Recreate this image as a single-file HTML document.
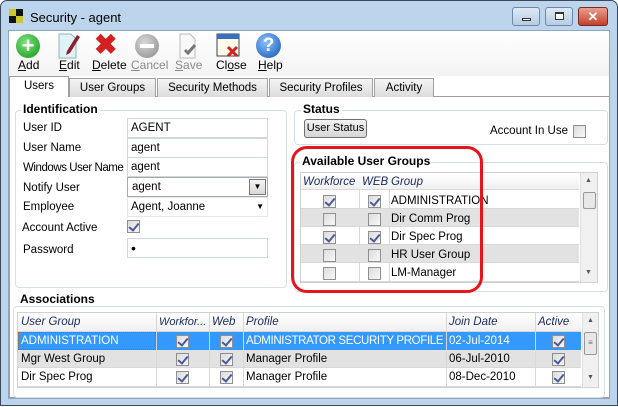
<!DOCTYPE html>
<html><head><meta charset="utf-8"><style>
*{box-sizing:border-box;margin:0;padding:0}
body{width:618px;height:407px;overflow:hidden;background:#fff;font-family:"Liberation Sans",sans-serif;font-size:11px;color:#000;position:relative}
.a{position:absolute}
.win{left:0;top:0;width:618px;height:406px;background:#bcd4ec;border:1px solid #3a4a5a;border-radius:7px 7px 0 0}
.client{left:8px;top:30px;width:602px;height:369px;background:#fff;border:1px solid #8fa6bd}
.tb{left:9px;top:31px;width:600px;height:45px;background:linear-gradient(#fff,#f3f3f3)}
.lbl{font-size:11.5px;white-space:nowrap}
.tab{top:78px;height:19px;border:1px solid #a0a0a0;border-bottom:none;background:linear-gradient(#f4f4f4,#dcdcdc);text-align:center;line-height:18px;font-size:11.5px;white-space:nowrap}
.panel{left:9px;top:96px;width:601px;height:302px;border:1px solid #a0a0a0;background:#fff}
.grp{border:1px solid #d5dfe5;border-radius:4px}
.gt{background:#fff;font-weight:bold;font-size:12px;padding:0 2px}
.in{border:1px solid #cfd8e0;background:#fff;height:20px;line-height:18px;padding-left:3px;font-size:11.5px}
.cb{width:13px;height:13px;border:1px solid #8f8f8f;background:linear-gradient(135deg,#dcdcdc,#f8f8f8)}
.ck::after{content:"";position:absolute;left:3px;top:0px;width:4px;height:8px;border:solid #4a5a9a;border-width:0 2px 2px 0;transform:rotate(40deg)}
.gh{font-style:italic;color:#1a2a5a;font-size:11.5px;white-space:nowrap}
.row{position:absolute;border-bottom:1px solid #d8d8d8}
.sb{background:#f0f0f0;border-left:1px solid #e0e0e0}
.s{font-size:11px}
</style></head><body>
<div class="a win"></div>
<div class="a" style="left:9px;top:9px;width:7px;height:7px;background:#c8c830"></div>
<div class="a" style="left:16px;top:9px;width:7px;height:7px;background:#111"></div>
<div class="a" style="left:9px;top:16px;width:7px;height:7px;background:#111"></div>
<div class="a" style="left:16px;top:16px;width:7px;height:7px;background:#c8c830"></div>
<div class="a" style="left:30px;top:10px;font-size:13px">Security - agent</div>
<div class="a" style="left:512px;top:7px;width:28px;height:19px;border:1px solid #6d88a8;border-radius:3px;background:linear-gradient(#dde9f5,#b7cce3)"><div class="a" style="left:9px;top:10px;width:9px;height:3px;border:1px solid #333;background:#fff"></div></div>
<div class="a" style="left:545px;top:7px;width:28px;height:19px;border:1px solid #6d88a8;border-radius:3px;background:linear-gradient(#dde9f5,#b7cce3)"><div class="a" style="left:9px;top:4px;width:9px;height:8px;border:1px solid #333;border-top-width:2px;background:#fff"></div></div>
<div class="a" style="left:578px;top:7px;width:30px;height:19px;border:1px solid #7a2a20;border-radius:3px;background:linear-gradient(#e8a090,#c4402a);color:#fff;font-weight:bold;text-align:center;line-height:17px;font-size:13px">✕</div>
<div class="a client"></div>
<div class="a tb"></div>
<div class="a" style="left:16px;top:34px;width:24px;height:24px;border-radius:50%;background:radial-gradient(circle at 40% 35%,#7fe07f,#129612);color:#fff;font-weight:bold;font-size:22px;line-height:23px;text-align:center">+</div>
<svg class="a" style="left:57px;top:33px" width="24" height="26"><path d="M2 1h12l5 5v19H2z" fill="#dff3f7" stroke="#8fb4c0"/><path d="M10 18l10-16 3 2-10 16-4 2z" fill="#8a2030"/></svg>
<div class="a" style="left:94px;top:32px;font-size:28px;color:#d42020;font-weight:bold;line-height:26px">✖</div>
<div class="a" style="left:135px;top:34px;width:24px;height:24px;border-radius:50%;background:radial-gradient(circle at 40% 35%,#d8d8d8,#8a8a8a)"><div class="a" style="left:5px;top:10px;width:14px;height:4px;background:#fff"></div></div>
<svg class="a" style="left:177px;top:33px" width="22" height="26"><path d="M3 1h10l5 5v19H3z" fill="#f8f8f8" stroke="#bbb"/><path d="M8 17l3 3 7-8" fill="none" stroke="#777" stroke-width="3"/></svg>
<svg class="a" style="left:216px;top:33px" width="25" height="26"><rect x="1" y="1" width="22" height="22" fill="#fffbe8" stroke="#345"/><rect x="1" y="1" width="22" height="5" fill="#3a6fc0"/><path d="M12 14l9 9M21 14l-9 9" stroke="#d42020" stroke-width="3"/></svg>
<div class="a" style="left:256px;top:33px;width:25px;height:25px;border-radius:50%;background:radial-gradient(circle at 40% 35%,#8ac4ff,#1450b0);color:#fff;font-weight:bold;font-size:19px;line-height:25px;text-align:center">?</div>
<div class="a lbl" style="left:18px;top:58px;font-size:12px"><u>A</u>dd</div>
<div class="a lbl" style="left:59px;top:58px;font-size:12px"><u>E</u>dit</div>
<div class="a lbl" style="left:92px;top:58px;font-size:12px"><u>D</u>elete</div>
<div class="a lbl" style="left:131px;top:58px;color:#8a8a8a;font-size:12px"><u>C</u>ancel</div>
<div class="a lbl" style="left:175px;top:58px;color:#8a8a8a;font-size:12px"><u>S</u>ave</div>
<div class="a lbl" style="left:216px;top:58px;font-size:12px">Cl<u>o</u>se</div>
<div class="a lbl" style="left:258px;top:58px;font-size:12px"><u>H</u>elp</div>
<div class="a panel"></div>
<div class="a tab" style="left:69px;width:87px">User Groups</div>
<div class="a tab" style="left:157px;width:111px">Security Methods</div>
<div class="a tab" style="left:269px;width:104px">Security Profiles</div>
<div class="a tab" style="left:374px;width:60px">Activity</div>
<div class="a tab" style="left:9px;top:76px;width:60px;height:21px;background:#fff;line-height:19px">Users</div>
<div class="a grp" style="left:15px;top:110px;width:272px;height:178px"></div>
<div class="a gt" style="left:21px;top:102px">Identification</div>
<div class="a lbl" style="left:23px;top:122px">User ID</div>
<div class="a lbl" style="left:23px;top:142px">User Name</div>
<div class="a lbl" style="left:23px;top:162px;letter-spacing:-0.45px">Windows User Name</div>
<div class="a lbl" style="left:23px;top:182px">Notify User</div>
<div class="a lbl" style="left:23px;top:201px">Employee</div>
<div class="a lbl" style="left:22px;top:222px">Account Active</div>
<div class="a lbl" style="left:23px;top:244px">Password</div>
<div class="a in" style="left:127px;top:118px;width:141px">AGENT</div>
<div class="a in" style="left:127px;top:138px;width:141px">agent</div>
<div class="a in" style="left:127px;top:157px;width:141px">agent</div>
<div class="a in" style="left:127px;top:177px;width:141px;border-color:#aaa;padding-left:4px">agent<div class="a" style="right:1px;top:1px;width:17px;height:16px;border:1px solid #777;background:linear-gradient(#f4f4f4,#d8d8d8);font-size:8px;text-align:center;line-height:14px">▼</div></div>
<div class="a in" style="left:127px;top:197px;width:141px;border-color:#e4e8ec">Agent, Joanne<span class="a" style="right:3px;top:0;font-size:8px">▼</span></div>
<div class="a cb ck" style="left:127px;top:220px"></div>
<div class="a in" style="left:127px;top:238px;width:141px;font-size:14px">•</div>
<div class="a grp" style="left:294px;top:110px;width:314px;height:35px"></div>
<div class="a gt" style="left:301px;top:102px">Status</div>
<div class="a" style="left:304px;top:119px;width:63px;height:19px;border:1px solid #707070;border-radius:3px;background:linear-gradient(#f2f2f2,#d6d6d6);text-align:center;line-height:17px;white-space:nowrap;font-size:11px">User Status</div>
<div class="a lbl" style="left:490px;top:125px">Account In Use</div>
<div class="a cb" style="left:573px;top:125px"></div>
<div class="a grp" style="left:294px;top:162px;width:314px;height:130px"></div>
<div class="a gt" style="left:300px;top:154px">Available User Groups</div>
<div class="a" style="left:300px;top:172px;width:298px;height:111px;border:1px solid #d0d0d0;background:#fff"></div>
<div class="a" style="left:301px;top:173px;width:278px;height:17px;background:linear-gradient(#fff,#f0f0f0);border-bottom:1px solid #d8d8d8"></div>
<div class="a gh" style="left:303px;top:176px">Workforce</div>
<div class="a gh" style="left:362px;top:176px">WEB</div>
<div class="a gh" style="left:391px;top:176px">Group</div>
<div class="a" style="left:359px;top:190px;width:1px;height:92px;background:#d8d8d8"></div>
<div class="a" style="left:389px;top:190px;width:1px;height:92px;background:#d8d8d8"></div>
<div class="row" style="left:301px;top:191px;width:278px;height:18px"></div>
<div class="row" style="left:301px;top:209px;width:278px;height:18px;background:#e2e2e2"></div>
<div class="row" style="left:301px;top:227px;width:278px;height:18px"></div>
<div class="row" style="left:301px;top:245px;width:278px;height:18px;background:#e2e2e2"></div>
<div class="row" style="left:301px;top:263px;width:278px;height:19px"></div>
<div class="a cb ck" style="left:323px;top:195px"></div><div class="a cb ck" style="left:368px;top:195px"></div>
<div class="a cb" style="left:323px;top:213px"></div><div class="a cb" style="left:368px;top:213px"></div>
<div class="a cb ck" style="left:323px;top:231px"></div><div class="a cb ck" style="left:368px;top:231px"></div>
<div class="a cb" style="left:323px;top:249px"></div><div class="a cb" style="left:368px;top:249px"></div>
<div class="a cb" style="left:323px;top:267px"></div><div class="a cb" style="left:368px;top:267px"></div>
<div class="a lbl" style="left:391px;top:195px">ADMINISTRATION</div>
<div class="a lbl" style="left:391px;top:213px">Dir Comm Prog</div>
<div class="a lbl" style="left:391px;top:231px">Dir Spec Prog</div>
<div class="a lbl" style="left:391px;top:249px">HR User Group</div>
<div class="a lbl" style="left:391px;top:267px">LM-Manager</div>
<div class="a sb" style="left:580px;top:173px;width:17px;height:109px"><div class="a" style="left:4px;top:4px;font-size:7px;color:#555">▲</div><div class="a" style="left:2px;top:19px;width:13px;height:17px;border:1px solid #999;border-radius:2px;background:#e8e8e8"></div><div class="a" style="left:4px;top:96px;font-size:7px;color:#555">▼</div></div>
<div class="a" style="left:291px;top:146px;width:192px;height:147px;border:3px solid #e8141c;border-radius:16px"></div>
<div class="a grp" style="left:13px;top:306px;width:592px;height:92px"></div>
<div class="a gt" style="left:18px;top:292px">Associations</div>
<div class="a" style="left:17px;top:312px;width:582px;height:76px;border:1px solid #d0d0d0;background:#fff"></div>
<div class="a" style="left:18px;top:313px;width:563px;height:19px;background:linear-gradient(#fff,#f0f0f0);border-bottom:1px solid #d8d8d8"></div>
<div class="a gh" style="left:21px;top:316px">User Group</div>
<div class="a gh s" style="left:159px;top:316px">Workfor...</div>
<div class="a gh" style="left:212px;top:316px">Web</div>
<div class="a gh" style="left:246px;top:316px">Profile</div>
<div class="a gh" style="left:449px;top:316px">Join Date</div>
<div class="a gh" style="left:538px;top:316px">Active</div>
<div class="row" style="left:18px;top:332px;width:563px;height:18px;background:#3399ff;border-bottom:none"></div>
<div class="a" style="left:18px;top:332px;width:138px;height:18px;border:1px dotted #c06000"></div>
<div class="row" style="left:18px;top:350px;width:563px;height:18px;background:#e2e2e2"></div>
<div class="row" style="left:18px;top:368px;width:563px;height:19px"></div>
<div class="a" style="left:156px;top:313px;width:1px;height:74px;background:#d8d8d8"></div>
<div class="a" style="left:209px;top:313px;width:1px;height:74px;background:#d8d8d8"></div>
<div class="a" style="left:243px;top:313px;width:1px;height:74px;background:#d8d8d8"></div>
<div class="a" style="left:446px;top:313px;width:1px;height:74px;background:#d8d8d8"></div>
<div class="a" style="left:535px;top:313px;width:1px;height:74px;background:#d8d8d8"></div>
<div class="a lbl" style="left:21px;top:335px;color:#fff">ADMINISTRATION</div>
<div class="a lbl" style="left:246px;top:335px;color:#fff;letter-spacing:-0.35px">ADMINISTRATOR SECURITY PROFILE</div>
<div class="a lbl" style="left:449px;top:335px;color:#fff">02-Jul-2014</div>
<div class="a lbl" style="left:21px;top:353px">Mgr West Group</div>
<div class="a lbl" style="left:246px;top:353px">Manager Profile</div>
<div class="a lbl" style="left:449px;top:353px">06-Jul-2010</div>
<div class="a lbl" style="left:21px;top:371px">Dir Spec Prog</div>
<div class="a lbl" style="left:246px;top:371px">Manager Profile</div>
<div class="a lbl" style="left:449px;top:371px">08-Dec-2010</div>
<div class="a cb ck" style="left:176px;top:335px"></div><div class="a cb ck" style="left:220px;top:335px"></div><div class="a cb ck" style="left:552px;top:335px"></div>
<div class="a cb ck" style="left:176px;top:353px"></div><div class="a cb ck" style="left:220px;top:353px"></div><div class="a cb ck" style="left:552px;top:353px"></div>
<div class="a cb ck" style="left:176px;top:371px"></div><div class="a cb ck" style="left:220px;top:371px"></div><div class="a cb ck" style="left:552px;top:371px"></div>
<div class="a sb" style="left:582px;top:313px;width:16px;height:74px"><div class="a" style="left:4px;top:4px;font-size:7px;color:#555">▲</div><div class="a" style="left:1px;top:19px;width:13px;height:23px;border:1px solid #999;border-radius:2px;background:#e8e8e8;font-size:8px;text-align:center;line-height:20px;color:#666">≡</div><div class="a" style="left:4px;top:61px;font-size:7px;color:#555">▼</div></div>
</body></html>
